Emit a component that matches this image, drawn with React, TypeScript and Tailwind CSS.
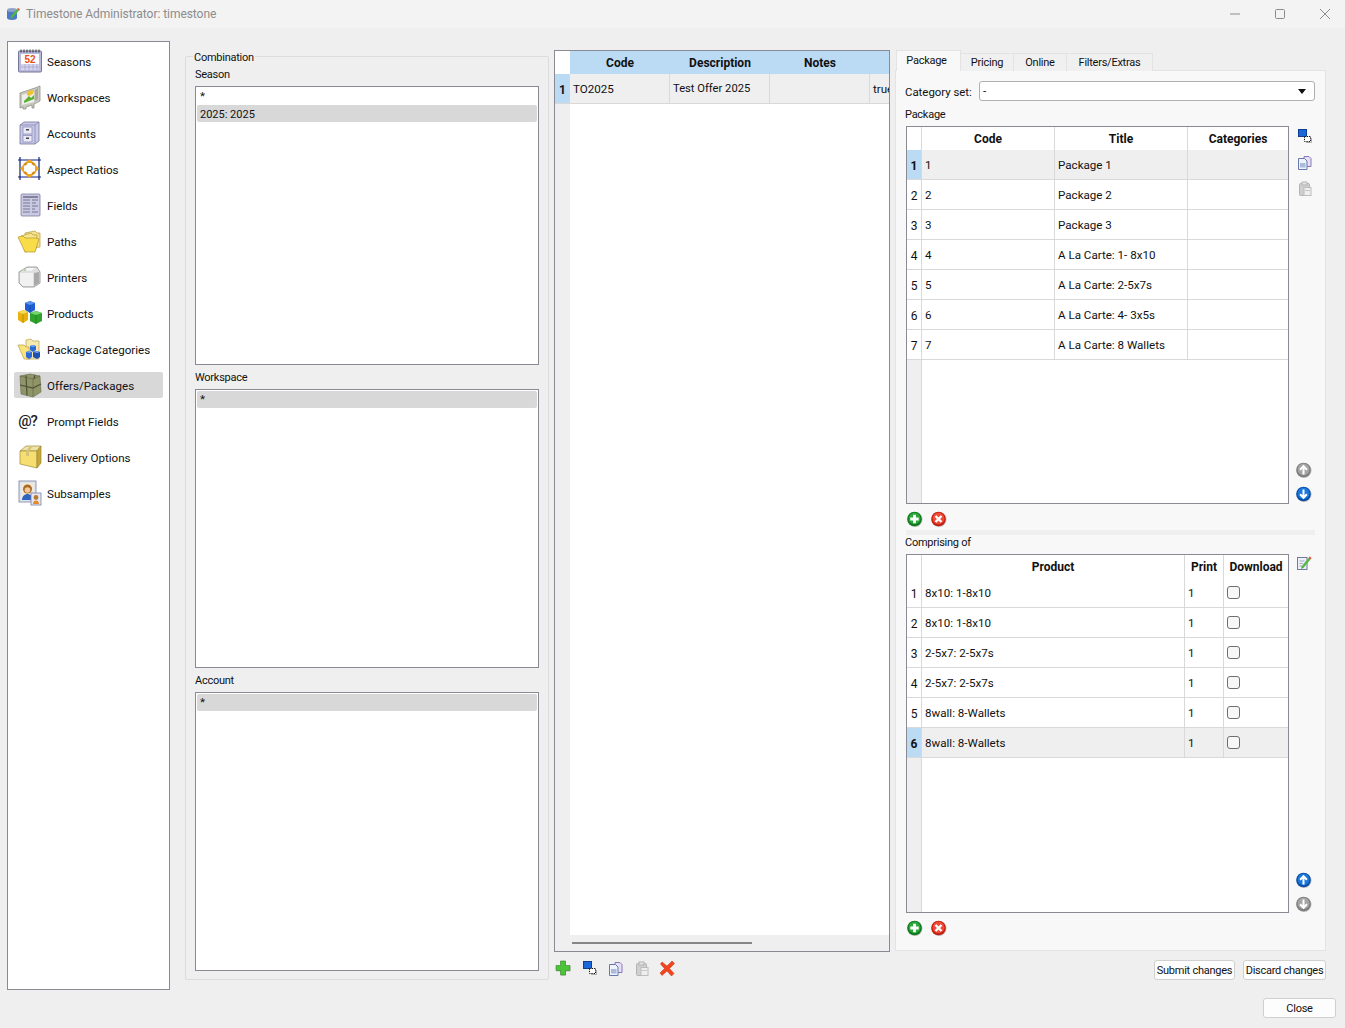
import type { ReactNode } from "react";

const lineGrey = "border-[#d9d9d9]";
const labelText = "text-[11px] tracking-[-0.25px]";

function Seasons() {
  return (
    <svg width="26" height="26" viewBox="0 0 26 26">
      <rect x="1.500" y="3" width="23" height="21" rx="1" fill="#b9b9dc" stroke="#77779a" />
      <rect x="4" y="6" width="18" height="10" fill="#fff" />
      <path d="M4 16h18v6H4z" fill="#d5d5ee" />
      <path d="M4 19h18M8 16v6M12 16v6M16 16v6M20 16v6" stroke="#9a9ac4" strokeWidth="0.6" />
      <path d="M4 1.500v3M7 1.500v3M10 1.500v3M13 1.500v3M16 1.500v3M19 1.500v3M22 1.500v3" stroke="#333" strokeWidth="1" />
      <text x="13" y="14.500" textAnchor="middle" fontSize="10" fontWeight="700" fill="#e8501c" fontFamily="Liberation Sans, sans-serif">52</text>
    </svg>
  );
}

function Workspaces() {
  return (
    <svg width="26" height="26" viewBox="0 0 26 26">
      <path d="M3 9l15-5 5-2v15l-6 3v4h-2v-3l-6 2v2H6v-2l-3 1z" fill="#c9c9c0" stroke="#8f8f86" strokeWidth="0.8" />
      <path d="M5 11l12-4v11L5 21z" fill="#eeeeea" />
      <path d="M18 6l3-2v11l-3 2z" fill="#a9a9a0" />
      <path d="M7 17l5-5 2 2 3-3v4l-10 4z" fill="#56b12f" />
      <path d="M10 8l4-2 3 1-1 3-4 2-2-1z" fill="#f1c12f" />
    </svg>
  );
}

function Accounts() {
  return (
    <svg width="26" height="26" viewBox="0 0 26 26">
      <path d="M3 5l4-3h15v19l-4 3H3z" fill="#c8c8ea" stroke="#77779d" strokeWidth="0.8" />
      <path d="M3 5h15v19M18 5l4-3" fill="none" stroke="#8888ae" strokeWidth="0.8" />
      <rect x="6" y="7" width="9" height="7" fill="#e9e9f8" stroke="#8888ae" strokeWidth="0.7" />
      <rect x="6" y="15.500" width="9" height="6.500" fill="#e9e9f8" stroke="#8888ae" strokeWidth="0.7" />
      <rect x="9" y="9" width="3" height="1.500" fill="#444" />
      <rect x="9" y="17.500" width="3" height="1.500" fill="#444" />
    </svg>
  );
}

function AspectRatios() {
  return (
    <svg width="26" height="26" viewBox="0 0 26 26">
      <path d="M1 4h23M1 21h23M3 1v23M22 1v23" stroke="#10217f" strokeWidth="1.200" />
      <path d="M12.500 3l4.500 4h-9zM12.500 22l4.500-4h-9zM3 12.500L7 8v9zM22 12.500L18 8v9z" fill="#f0a51f" />
      <path d="M7 9l3-2M18 9l-3-2M7 16l3 2M18 16l-3 2" stroke="#d88e14" strokeWidth="2.500" />
    </svg>
  );
}

function Fields() {
  return (
    <svg width="26" height="26" viewBox="0 0 26 26">
      <rect x="4" y="2" width="19" height="22" rx="1" fill="#c9c9e4" stroke="#7d7d9e" strokeWidth="0.8" />
      <path d="M6 5h15" stroke="#55556f" strokeWidth="1.200" />
      <path d="M6 8h7M15 8h6M6 11h7M15 11h4M6 14h7M15 14h6M6 17h7M15 17h3M6 20h7M15 20h6" stroke="#76768f" strokeWidth="1" />
    </svg>
  );
}

function Paths() {
  return (
    <svg width="26" height="26" viewBox="0 0 26 26">
      <path d="M8 5l10-2 2 2 3 0 0 14-15 2z" fill="#f4e08f" stroke="#b19a3a" strokeWidth="0.7" />
      <path d="M4 8l10-3 2 2 4 0-1 14-11 3z" fill="#f7e58c" stroke="#b19a3a" strokeWidth="0.7" />
      <path d="M1 9l5-1 2 2 11 0 3 1-4 13H8z" fill="#f9dc4a" stroke="#b3952a" strokeWidth="0.7" />
    </svg>
  );
}

function Printers() {
  return (
    <svg width="26" height="26" viewBox="0 0 26 26">
      <path d="M2 8l8-5h10l3 5v11l-6 4H6l-4-4z" fill="#dfdfdf" stroke="#8e8e8e" strokeWidth="0.8" />
      <path d="M6 6l5-2h7l-4 3z" fill="#f7f7f7" />
      <path d="M3 9h13v13H6l-3-3z" fill="#f1f1f1" />
      <path d="M17 9l5-1v11l-5 3z" fill="#a9a9a9" />
      <circle cx="8" cy="6" r="0.7" fill="#55b035" />
    </svg>
  );
}

function Products() {
  return (
    <svg width="26" height="26" viewBox="0 0 26 26">
      <path d="M8 3l5-2 5 2v7l-5 3-5-3z" fill="#1f5fd4" />
      <path d="M8 3l5 2 5-2-5-2z" fill="#5b93ef" />
      <path d="M13 5v8" stroke="#143f99" strokeWidth="0.6" />
      <path d="M1 12l5-2 5 2v8l-5 3-5-3z" fill="#e8b30f" />
      <path d="M1 12l5 2 5-2-5-2z" fill="#f7d95a" />
      <path d="M6 14v9" stroke="#a17a08" strokeWidth="0.6" />
      <path d="M13 13l6-2 6 2v8l-6 3-6-3z" fill="#2fa32d" />
      <path d="M13 13l6 2 6-2-6-2z" fill="#74d36a" />
      <path d="M19 15v9" stroke="#17731a" strokeWidth="0.6" />
    </svg>
  );
}

function PackageCategories() {
  return (
    <svg width="26" height="26" viewBox="0 0 26 26">
      <path d="M9 4l5-1 2 2h6v18H9z" fill="#f5e9b0" stroke="#b79f48" strokeWidth="0.7" />
      <path d="M1 9h6l2 2 3 0 1 12H7z" fill="#f8e27a" stroke="#b79f48" strokeWidth="0.7" />
      <path d="M13 10l3-1 3 1v4l-3 2-3-2z" fill="#2a69d8" />
      <path d="M9 16l3-1 3 1v5l-3 2-3-2z" fill="#2a69d8" />
      <path d="M16 16l4-1 3 1v5l-3 2-4-2z" fill="#1d51b4" />
      <path d="M13 10l3 1 3-1-3-1zM9 16l3 1 3-1-3-1zM16 16l4 1 3-1-3-1z" fill="#75a3f0" />
    </svg>
  );
}

function OffersPackages() {
  return (
    <svg width="26" height="26" viewBox="0 0 26 26">
      <path d="M3 4l10-2 10 2 1 16-8 5-12-3z" fill="#8f9566" stroke="#66694a" strokeWidth="0.6" />
      <path d="M3 4l13 3 7-3" fill="none" stroke="#6c7050" strokeWidth="0.8" />
      <path d="M16 7v18" stroke="#6c7050" strokeWidth="0.8" />
      <path d="M3 13l13 3 8-4M9 3.500l1 20M18 3l-1 4" fill="none" stroke="#4e5139" strokeWidth="1.200" />
    </svg>
  );
}

function DeliveryOptions() {
  return (
    <svg width="26" height="26" viewBox="0 0 26 26">
      <path d="M3 7l6-5h15l-4 5z" fill="#efe3a5" stroke="#9c8a3a" strokeWidth="0.7" />
      <path d="M3 7h17v17L3 20z" fill="#f7de70" stroke="#9c8a3a" strokeWidth="0.7" />
      <path d="M20 7l4-5v17l-4 5z" fill="#c7a73a" stroke="#9c8a3a" strokeWidth="0.7" />
      <path d="M9 7l4-5h3l-4 5v5H9z" fill="#d7c27a" />
    </svg>
  );
}

function Subsamples() {
  return (
    <svg width="26" height="26" viewBox="0 0 26 26">
      <rect x="2" y="1" width="17" height="21" fill="#dfe3f0" stroke="#7c7f9e" strokeWidth="0.8" />
      <rect x="4" y="3" width="13" height="17" fill="#f0ead5" />
      <circle cx="10.500" cy="9" r="4.500" fill="#a86a24" />
      <circle cx="10.500" cy="10" r="2.800" fill="#f5c99b" />
      <path d="M5 20c0-4 3-6 5.500-6S16 16 16 20z" fill="#2d66c2" />
      <rect x="14" y="13" width="10" height="12" fill="#e5e8f4" stroke="#7c7f9e" strokeWidth="0.8" />
      <circle cx="19" cy="17.500" r="2.400" fill="#b67b2c" />
      <path d="M16 24c0-2.500 1.500-3.500 3-3.500s3 1 3 3.500z" fill="#e08b2e" />
    </svg>
  );
}

const navItems: { label: string; icon: ReactNode; active?: boolean }[] = [
  { label: "Seasons", icon: <Seasons /> },
  { label: "Workspaces", icon: <Workspaces /> },
  { label: "Accounts", icon: <Accounts /> },
  { label: "Aspect Ratios", icon: <AspectRatios /> },
  { label: "Fields", icon: <Fields /> },
  { label: "Paths", icon: <Paths /> },
  { label: "Printers", icon: <Printers /> },
  { label: "Products", icon: <Products /> },
  { label: "Package Categories", icon: <PackageCategories /> },
  { label: "Offers/Packages", icon: <OffersPackages />, active: true },
  {
    label: "Prompt Fields",
    icon: <span className="-ml-[5px] text-[15px] font-medium leading-none tracking-[-1px] text-[#222]">@?</span>,
  },
  { label: "Delivery Options", icon: <DeliveryOptions /> },
  { label: "Subsamples", icon: <Subsamples /> },
];

function RoundIcon({ color, dark, children }: { color: string; dark: string; children: ReactNode }) {
  return (
    <svg width="16" height="16" viewBox="0 0 16 16" className="shrink-0">
      <circle cx="8" cy="8.500" r="7.500" fill="#00000040" />
      <circle cx="7.500" cy="8" r="7.300" fill={dark} />
      <circle cx="7.500" cy="7.400" r="5.900" fill={color} />
      <g transform="translate(-0.500 0)">{children}</g>
    </svg>
  );
}

function RoundAdd() {
  return (
    <RoundIcon color="#2aa63a" dark="#0d7a1c">
      <path d="M8 3.800v8.400M3.800 8h8.400" stroke="#fff" strokeWidth="2.800" />
    </RoundIcon>
  );
}

function RoundDelete() {
  return (
    <RoundIcon color="#ef4a35" dark="#c41f12">
      <path d="M5 5l6 6M11 5l-6 6" stroke="#fff" strokeWidth="2.400" />
    </RoundIcon>
  );
}

function ArrowUp({ off }: { off?: boolean }) {
  return (
    <RoundIcon color={off ? "#a5a5a5" : "#1b78dc"} dark={off ? "#7d7d7d" : "#0a4fa8"}>
      <path d="M8 12.500V5M4.600 7.800L8 4.200l3.400 3.600" stroke="#fff" strokeWidth="2" fill="none" />
    </RoundIcon>
  );
}

function ArrowDown({ off }: { off?: boolean }) {
  return (
    <RoundIcon color={off ? "#a5a5a5" : "#1b78dc"} dark={off ? "#7d7d7d" : "#0a4fa8"}>
      <path d="M8 3.500V11M4.600 8.200L8 11.800l3.400-3.600" stroke="#fff" strokeWidth="2" fill="none" />
    </RoundIcon>
  );
}

function CopyBoxes() {
  return (
    <svg width="16" height="16" viewBox="0 0 16 16" className="shrink-0">
      <rect x="2.500" y="1.500" width="8" height="7" fill="#1c68d8" stroke="#0f3f92" />
      <rect x="8.500" y="8.500" width="6" height="5" fill="#fff" stroke="#111" strokeDasharray="1.300 1" />
      <path d="M15.500 10v4.500H10" stroke="#aaa" fill="none" />
    </svg>
  );
}

function CopyDoc() {
  return (
    <svg width="16" height="16" viewBox="0 0 16 16" className="shrink-0">
      <path d="M8 2.500h5l2 2v8H8z" fill="#e5e0f3" stroke="#8878ba" />
      <path d="M2.500 4.500h6l2.500 2.500v8.500H2.500z" fill="#eef2fa" stroke="#6678ae" />
      <rect x="4" y="9" width="5.500" height="4.500" fill="#a9bbd9" />
    </svg>
  );
}

function PasteDoc() {
  return (
    <svg width="16" height="16" viewBox="0 0 16 16" className="shrink-0">
      <rect x="3.500" y="3.500" width="10" height="12" rx="1" fill="#cfcfcf" stroke="#b3b3b3" />
      <rect x="6" y="2" width="5" height="3" fill="#e5e5e5" stroke="#b3b3b3" />
      <rect x="8" y="7.500" width="7" height="8" fill="#efefef" stroke="#bdbdbd" />
      <path d="M9 10.500h5" stroke="#c8c8c8" />
    </svg>
  );
}

function GreenCross() {
  return (
    <svg width="16" height="16" viewBox="0 0 16 16" className="shrink-0">
      <path d="M6 2.500h5v4h4.500v5H11v4H6v-4H1.500v-5H6z" fill="#00000035" />
      <path d="M5.500 1h5v4.500H15v5h-4.500V15h-5v-4.500H1v-5h4.500z" fill="#4fc23c" stroke="#2c8a20" strokeWidth="0.6" />
    </svg>
  );
}

function RedCross() {
  return (
    <svg width="16" height="16" viewBox="0 0 16 16" className="shrink-0">
      <path d="M3 2l5 4 5-5 2.500 2.500-5 5 4.500 5-2.500 2.500L8 11l-5 4.500L1 13l4.500-4.500L1.500 4z" fill="#f0461f" stroke="#c72f10" strokeWidth="0.5" />
    </svg>
  );
}

function EditNote() {
  return (
    <svg width="16" height="16" viewBox="0 0 16 16" className="shrink-0">
      <rect x="1.500" y="2.500" width="9.500" height="12" fill="#eef0f8" stroke="#7379a0" />
      <path d="M3.500 6h5M3.500 8.500h3.500M3.500 11h3" stroke="#a3a8c4" />
      <path d="M5.500 11.500l7-8.500 2 1.500-7 8.500-2.500 1z" fill="#58b947" />
      <path d="M12.500 3l1-1.500 2 1.500-1 1.500z" fill="#e2483a" />
    </svg>
  );
}

function ListBox({ items, selected }: { items: string[]; selected: number }) {
  return (
    <div className="mt-1 h-[279px] w-[344px] border border-[#8a8a94] bg-white p-px">
      {items.map((item, i) => (
        <div
          key={item}
          className={`flex h-[17px] items-center rounded-[2px] pl-[3px] ${i === selected ? "bg-[#d8d8d8]" : ""} ${
            item === "*" ? "pb-[2px]" : "pt-[2px] text-[11px]"
          }`}
        >
          {item}
        </div>
      ))}
    </div>
  );
}

function Cell({ width, children, selected }: { width: string; children?: ReactNode; selected?: boolean }) {
  return (
    <div className={`${width} ${selected ? "bg-[#efefef]" : ""} flex shrink-0 items-center border-r pl-[3px] ${lineGrey}`}>
      {children}
    </div>
  );
}

function RowNumber({ n, selected }: { n: number; selected: boolean }) {
  return (
    <div
      className={`flex w-[15px] shrink-0 items-center justify-center border-r pt-[2px] text-[12px] ${lineGrey} ${
        selected ? "bg-[#bbdaf3] font-bold" : "bg-white"
      }`}
    >
      {n}
    </div>
  );
}

function HeaderCell({ width, label }: { width: string; label: string }) {
  return (
    <div className={`${width} flex shrink-0 items-center justify-center border-r text-[12px] font-bold ${lineGrey}`}>
      {label}
    </div>
  );
}

const packages = [
  ["1", "Package 1"],
  ["2", "Package 2"],
  ["3", "Package 3"],
  ["4", "A La Carte: 1- 8x10"],
  ["5", "A La Carte: 2-5x7s"],
  ["6", "A La Carte: 4- 3x5s"],
  ["7", "A La Carte: 8 Wallets"],
];

const products = ["8x10: 1-8x10", "8x10: 1-8x10", "2-5x7: 2-5x7s", "2-5x7: 2-5x7s", "8wall: 8-Wallets", "8wall: 8-Wallets"];

function PackageTable() {
  return (
    <div className="flex h-[378px] w-[383px] flex-col border border-[#8a8a94] bg-white">
      <div className="flex h-[23px] shrink-0">
        <div className={`w-[15px] shrink-0 border-r ${lineGrey}`} />
        <HeaderCell width="w-[133px]" label="Code" />
        <HeaderCell width="w-[133px]" label="Title" />
        <div className="flex flex-1 items-center justify-center text-[12px] font-bold">Categories</div>
      </div>
      {packages.map(([code, title], i) => (
        <div key={code} className={`flex h-[30px] shrink-0 border-b ${lineGrey}`}>
          <RowNumber n={i + 1} selected={i === 0} />
          <Cell width="w-[133px]" selected={i === 0}>{code}</Cell>
          <Cell width="w-[133px]" selected={i === 0}>{title}</Cell>
          <div className={`flex-1 ${i === 0 ? "bg-[#efefef]" : ""}`} />
        </div>
      ))}
      <div className={`w-[15px] flex-1 border-r bg-[#efefef] ${lineGrey}`} />
    </div>
  );
}

function ProductTable() {
  return (
    <div className="flex h-[359px] w-[383px] flex-col border border-[#8a8a94] bg-white">
      <div className="flex h-[23px] shrink-0">
        <div className={`w-[15px] shrink-0 border-r ${lineGrey}`} />
        <HeaderCell width="w-[263px]" label="Product" />
        <HeaderCell width="w-[39px]" label="Print" />
        <div className="flex flex-1 items-center justify-center text-[12px] font-bold">Download</div>
      </div>
      {products.map((p, i) => (
        <div key={i} className={`flex h-[30px] shrink-0 border-b ${lineGrey}`}>
          <RowNumber n={i + 1} selected={i === 5} />
          <Cell width="w-[263px]" selected={i === 5}>{p}</Cell>
          <Cell width="w-[39px]" selected={i === 5}>1</Cell>
          <div className={`flex flex-1 items-center pl-[3px] ${i === 5 ? "bg-[#efefef]" : ""}`}>
            <input
              type="checkbox"
              readOnly
              className="h-[13px] w-[13px] appearance-none rounded-[3px] border border-[#6e6e6e] bg-[#f7f7f7]"
            />
          </div>
        </div>
      ))}
      <div className={`w-[15px] flex-1 border-r bg-[#efefef] ${lineGrey}`} />
    </div>
  );
}

function Tab({ label, width }: { label: string; width: string }) {
  return (
    <div className={`${width} ${labelText} -ml-px flex h-[18px] items-center justify-center border border-b-0 border-[#e3e3e3] bg-[#f0f0f0]`}>
      {label}
    </div>
  );
}

function ActionButton({ label, width }: { label: string; width: string }) {
  return (
    <div className={`${width} ${labelText} flex h-5 items-center justify-center whitespace-nowrap rounded-[3px] border border-[#d0d0d0] bg-[#fdfdfd] pt-[2px]`}>
      {label}
    </div>
  );
}

export default function App() {
  return (
    <div className="flex h-[1028px] w-[1345px] flex-col overflow-hidden bg-[#efefef] font-['Roboto',sans-serif] text-[11.6px] leading-4 text-[#111]">
      <div className="flex h-7 shrink-0 items-center bg-[#f3f3f3] pl-[6px] text-[12px] tracking-[-0.05px] text-[#8c8c8c]">
        <svg width="14" height="14" viewBox="0 0 14 14">
          <ellipse cx="6" cy="3" rx="5" ry="2" fill="#8fa3c9" />
          <path d="M1 3v8c0 1 2.200 2 5 2s5-1 5-2V3c0 1-2.200 2-5 2S1 4 1 3z" fill="#4c78c4" />
          <path d="M5 9l6-7 2 1.500-6 7-2.500 1z" fill="#4fb548" />
          <path d="M11 2l1-1 2 1.500-1 1z" fill="#e0483a" />
        </svg>
        <span className="ml-[6px]">Timestone Administrator: timestone</span>
        <div className="ml-auto flex items-center gap-[35px] pr-[15px]">
          <svg width="10" height="10" viewBox="0 0 10 10">
            <path d="M0 5h10" stroke="#8c8c8c" />
          </svg>
          <svg width="10" height="10" viewBox="0 0 10 10">
            <rect x="0.500" y="0.500" width="9" height="9" rx="1" fill="none" stroke="#8c8c8c" />
          </svg>
          <svg width="10" height="10" viewBox="0 0 10 10">
            <path d="M0 0l10 10M10 0L0 10" stroke="#8c8c8c" />
          </svg>
        </div>
      </div>

      <div className="flex h-[962px] shrink-0 items-start pl-[7px]">
        <nav className="mt-[13px] flex h-[949px] w-[163px] shrink-0 flex-col gap-[10px] border border-[#8a8a94] bg-white pl-[6px] pt-[6px]">
          {navItems.map((item) => (
            <div
              key={item.label}
              className={`flex h-[26px] w-[149px] shrink-0 items-center rounded-[2px] pl-[3px] ${item.active ? "bg-[#d8d8d8]" : ""}`}
            >
              <div className="flex w-[26px] shrink-0 items-center justify-center">{item.icon}</div>
              <span className="ml-1 pt-[2px]">{item.label}</span>
            </div>
          ))}
        </nav>

        <div className="relative ml-[15px] mt-7 h-[924px] w-[364px] shrink-0 rounded-[2px] border border-[#dcdcdc] pl-[9px] pt-[9px]">
          <span className={`${labelText} absolute -top-[7px] left-[7px] bg-[#efefef] px-px`}>Combination</span>
          <div className={`${labelText} h-4 pt-px`}>Season</div>
          <ListBox items={["*", "2025: 2025"]} selected={1} />
          <div className={`${labelText} mt-1 h-4 pt-px`}>Workspace</div>
          <ListBox items={["*"]} selected={0} />
          <div className={`${labelText} mt-1 h-4 pt-px`}>Account</div>
          <ListBox items={["*"]} selected={0} />
        </div>

        <div className="ml-[5px] mt-[22px] w-[336px] shrink-0">
          <div className="flex h-[902px] flex-col border border-[#8a8a94] bg-white">
            <div className="flex h-[23px] shrink-0">
              <div className="w-[15px] shrink-0" />
              <div className="flex flex-1 items-center bg-[#bbdaf3] text-[12px] font-bold">
                <div className="w-[100px] text-center">Code</div>
                <div className="w-[100px] text-center">Description</div>
                <div className="w-[100px] text-center">Notes</div>
              </div>
            </div>
            <div className={`flex h-[30px] shrink-0 border-b ${lineGrey}`}>
              <div className="flex w-[15px] shrink-0 items-center justify-center bg-[#bbdaf3] pt-[2px] text-[12px] font-bold">1</div>
              <Cell width="w-[100px]" selected>TO2025</Cell>
              <Cell width="w-[100px]" selected>
                <span className="text-[11.2px]">Test Offer 2025</span>
              </Cell>
              <Cell width="w-[100px]" selected />
              <div className="flex flex-1 items-center overflow-hidden bg-[#efefef] pl-[3px]">true</div>
            </div>
            <div className="w-[15px] flex-1 bg-[#efefef]" />
            <div className="h-4 shrink-0 bg-[#efefef] pl-[17px] pt-[7px]">
              <div className="h-[2px] w-[180px] bg-[#868686]" />
            </div>
          </div>
          <div className="mt-2 flex gap-[10px] pl-px">
            <GreenCross />
            <CopyBoxes />
            <CopyDoc />
            <PasteDoc />
            <RedCross />
          </div>
        </div>

        <div className="ml-[5px] mt-[22px] w-[431px] shrink-0">
          <div className="flex h-[21px] items-end pl-px">
            <div className={`${labelText} relative z-10 flex h-[21px] w-[65px] items-center justify-center border border-b-0 border-[#e3e3e3] bg-[#f8f8f8] pr-[4px]`}>
              Package
            </div>
            <Tab label="Pricing" width="w-[54px]" />
            <Tab label="Online" width="w-[54px]" />
            <Tab label="Filters/Extras" width="w-[87px]" />
          </div>
          <div className="-mt-px h-[881px] border border-[#e3e3e3] bg-[#f8f8f8] pl-[10px] pt-[10px]">
            <div className="flex items-center">
              <span className="-ml-px w-[74px] pt-[2px] text-[11.4px]">Category set:</span>
              <div className="flex h-5 w-[336px] items-center justify-between rounded-[3px] border border-[#b0b0b0] bg-white pl-[3px] pr-2">
                -
                <span className="h-0 w-0 border-x-[4px] border-t-[5px] border-x-transparent border-t-[#111]" />
              </div>
            </div>
            <div className={`${labelText} -ml-px mt-[5px] h-4 pt-px`}>Package</div>
            <div className="mt-1 flex">
              <PackageTable />
              <div className="ml-[7px] flex h-[378px] flex-col justify-between pb-[1px] pt-[2px]">
                <div className="flex flex-col gap-[10px]">
                  <CopyBoxes />
                  <CopyDoc />
                  <PasteDoc />
                </div>
                <div className="flex flex-col gap-2 pb-[1px]">
                  <ArrowUp off />
                  <ArrowDown />
                </div>
              </div>
            </div>
            <div className="mt-[7px] flex gap-2 pl-px">
              <RoundAdd />
              <RoundDelete />
            </div>
            <div className="mt-[3px] h-[5px] w-[409px] bg-[#efefef]" />
            <div className={`${labelText} -ml-px h-[15px] leading-[15px]`}>Comprising of</div>
            <div className="mt-1 flex">
              <ProductTable />
              <div className="ml-[7px] flex h-[359px] flex-col justify-between pt-[1px]">
                <EditNote />
                <div className="flex flex-col gap-2 pb-[1px]">
                  <ArrowUp />
                  <ArrowDown off />
                </div>
              </div>
            </div>
            <div className="mt-[7px] flex gap-2 pl-px">
              <RoundAdd />
              <RoundDelete />
            </div>
          </div>
          <div className="mt-[9px] flex justify-end gap-2">
            <ActionButton label="Submit changes" width="w-[81px]" />
            <ActionButton label="Discard changes" width="w-[83px]" />
          </div>
        </div>
      </div>

      <div className="flex justify-end pr-[9px] pt-2">
        <ActionButton label="Close" width="w-[73px]" />
      </div>
    </div>
  );
}
